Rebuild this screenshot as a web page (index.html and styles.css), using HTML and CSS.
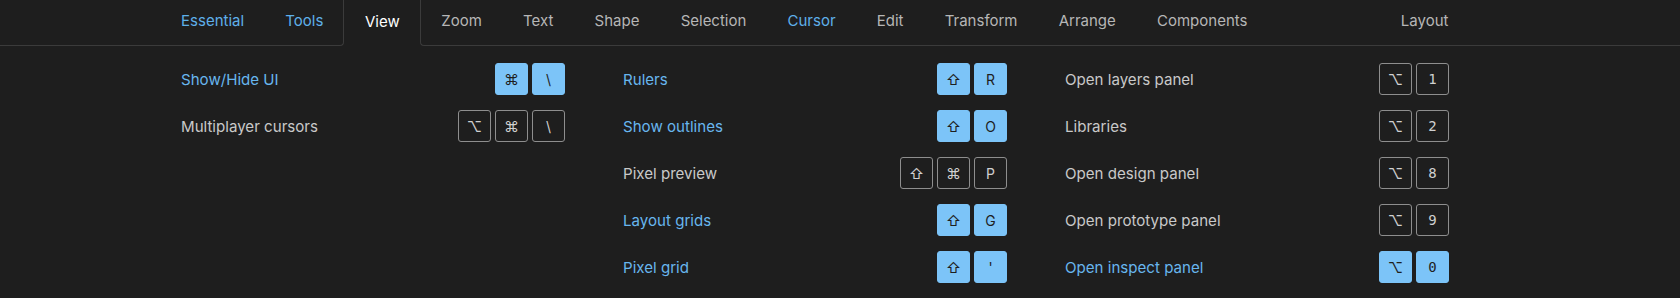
FILE: index.html
```html
<!DOCTYPE html>
<html lang="en">
<head>
    <meta charset="UTF-8">
    <title>Keyboard shortcuts</title>
    <link rel="stylesheet" href="styles.css">
</head>
<body>

<nav class="tabs">
    <div class="tab-group before">
        <span class="tab blue">Essential</span>
        <span class="tab blue">Tools</span>
    </div>
    <span class="tab active">View</span>
    <div class="tab-group after">
        <span class="tab">Zoom</span>
        <span class="tab">Text</span>
        <span class="tab">Shape</span>
        <span class="tab">Selection</span>
        <span class="tab blue">Cursor</span>
        <span class="tab">Edit</span>
        <span class="tab">Transform</span>
        <span class="tab">Arrange</span>
        <span class="tab">Components</span>
        <span class="tab layout">Layout</span>
    </div>
</nav>

<main class="shortcuts">
    <div class="column">
        <div class="row learned">
            <span class="label">Show/Hide UI</span>
            <span class="keys"><kbd class="sym">⌘</kbd><kbd>\</kbd></span>
        </div>
        <div class="row">
            <span class="label">Multiplayer cursors</span>
            <span class="keys"><kbd class="sym">⌥</kbd><kbd class="sym">⌘</kbd><kbd>\</kbd></span>
        </div>
    </div>

    <div class="column">
        <div class="row learned">
            <span class="label">Rulers</span>
            <span class="keys"><kbd class="sym">⇧</kbd><kbd>R</kbd></span>
        </div>
        <div class="row learned">
            <span class="label">Show outlines</span>
            <span class="keys"><kbd class="sym">⇧</kbd><kbd>O</kbd></span>
        </div>
        <div class="row">
            <span class="label">Pixel preview</span>
            <span class="keys"><kbd class="sym">⇧</kbd><kbd class="sym">⌘</kbd><kbd>P</kbd></span>
        </div>
        <div class="row learned">
            <span class="label">Layout grids</span>
            <span class="keys"><kbd class="sym">⇧</kbd><kbd>G</kbd></span>
        </div>
        <div class="row learned">
            <span class="label">Pixel grid</span>
            <span class="keys"><kbd class="sym">⇧</kbd><kbd>'</kbd></span>
        </div>
    </div>

    <div class="column">
        <div class="row">
            <span class="label">Open layers panel</span>
            <span class="keys"><kbd class="sym">⌥</kbd><kbd class="mono">1</kbd></span>
        </div>
        <div class="row">
            <span class="label">Libraries</span>
            <span class="keys"><kbd class="sym">⌥</kbd><kbd class="mono">2</kbd></span>
        </div>
        <div class="row">
            <span class="label">Open design panel</span>
            <span class="keys"><kbd class="sym">⌥</kbd><kbd class="mono">8</kbd></span>
        </div>
        <div class="row">
            <span class="label">Open prototype panel</span>
            <span class="keys"><kbd class="sym">⌥</kbd><kbd class="mono">9</kbd></span>
        </div>
        <div class="row learned">
            <span class="label">Open inspect panel</span>
            <span class="keys"><kbd class="sym">⌥</kbd><kbd class="mono">0</kbd></span>
        </div>
    </div>
</main>

</body>
</html>
```

FILE: styles.css
```css
body {
    margin: 0;
    background: #1e1e1e;
    color: #c9c9c9;
    font-family: Inter, 'Noto Sans', sans-serif;
    font-size: 15px;
    overflow: hidden;
}

/* tab strip */
.tabs {
    display: flex;
    height: 46px;
}

.tab-group {
    display: flex;
    border-bottom: 1px solid #3b3b3b;
}

.before {
    padding-left: 160.5px;
    border-right: 1px solid #3b3b3b;
    border-bottom-right-radius: 4px;
}

.after {
    flex: 1;
    padding-right: 211px;
    border-left: 1px solid #3b3b3b;
    border-bottom-left-radius: 4px;
}

.tab {
    display: flex;
    align-items: center;
    padding: 0 20.6px 4px;
    color: #b6b6b6;
    white-space: nowrap;
}

.tab.blue {
    color: #5eb0ea;
}

.tab.active {
    color: #ffffff;
    padding-right: 20px;
}

.before .tab:last-child {
    padding-right: 20px;
}

.tab.layout {
    margin-left: auto;
}

/* shortcut grid */
.shortcuts {
    display: grid;
    grid-template-columns: repeat(3, 384px);
    column-gap: 58px;
    padding: 17px 0 0 181px;
}

.column {
    display: flex;
    flex-direction: column;
    gap: 15px;
}

.row {
    display: flex;
    align-items: center;
    justify-content: space-between;
    height: 32px;
}

.label {
    font-size: 15.1px;
}

.row.learned .label {
    color: #68b6ee;
}

.keys {
    display: flex;
    gap: 4px;
}

kbd {
    display: flex;
    align-items: center;
    justify-content: center;
    box-sizing: border-box;
    width: 33px;
    height: 32px;
    border: 1px solid #8e8e8e;
    border-radius: 3px;
    color: #d0d0d0;
    font-family: Inter, 'DejaVu Sans', sans-serif;
    font-size: 14px;
}

kbd.sym {
    font-size: 15px;
}

kbd.mono {
    font-family: 'DejaVu Sans Mono', monospace;
}

.learned kbd {
    background: #7cc4f8;
    border-color: #7cc4f8;
    color: #1e1e1e;
}
```
